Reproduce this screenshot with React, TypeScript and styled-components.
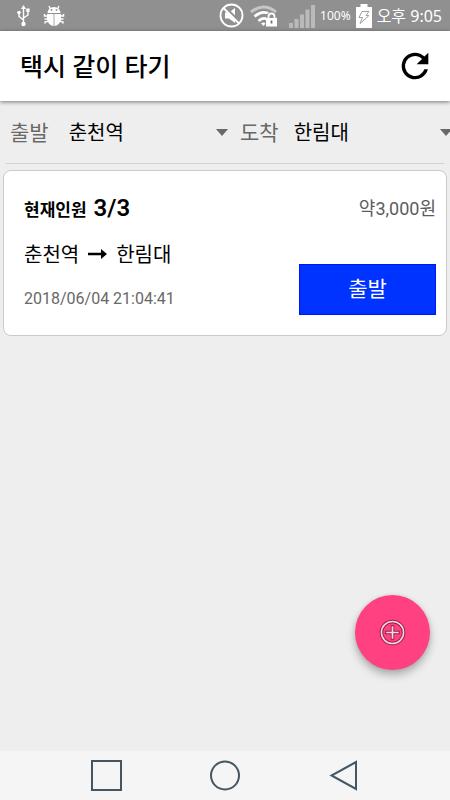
import React from "react";
import styled, { createGlobalStyle } from "styled-components";

const GlobalStyle = createGlobalStyle`
  * { box-sizing: border-box; }
  body {
    margin: 0;
    background: #eeeeee;
    font-family: Roboto, "Noto Sans CJK KR", sans-serif;
    color: #000;
  }
  button, select { font-family: inherit; }
`;

const Screen = styled.div`
  min-height: 100vh;
  display: flex;
  flex-direction: column;
  overflow: hidden;
`;

const StatusBar = styled.div`
  height: 31px;
  flex: none;
  display: flex;
  align-items: center;
  justify-content: space-between;
  padding: 0 8px 0 16px;
  background: #909090;
  color: #fff;
`;

const StatusGroup = styled.div<{ $gap: number }>`
  display: flex;
  align-items: center;
  gap: ${(p) => p.$gap}px;
  svg { display: block; flex: none; }
`;

const Connectivity = styled.div`
  display: flex;
  align-items: center;
  gap: 6px;
  margin-right: 7px;
`;

const Battery = styled.span`
  font: 12px/20px "Noto Sans", sans-serif;
`;

const Clock = styled.time`
  font: 16px/24px "Noto Sans", "Noto Sans CJK KR", sans-serif;
  white-space: nowrap;
`;

const AppBar = styled.header`
  height: 70px;
  flex: none;
  display: flex;
  align-items: center;
  justify-content: space-between;
  padding: 0 15px 0 20px;
  background: #fff;
  box-shadow: 0 1px 4px rgba(0, 0, 0, 0.5);
`;

const Title = styled.h1`
  margin: 0;
  padding-top: 4px;
  font-size: 25px;
  line-height: 36px;
  font-weight: 500;
`;

const IconButton = styled.button`
  display: flex;
  padding: 0;
  border: 0;
  background: none;
  color: #000;
`;

const Filters = styled.form`
  display: grid;
  grid-template-columns: 36fr 35fr;
  gap: 12px;
  height: 63px;
  margin: 0 -2px 0 6px;
  padding-left: 4px;
`;

const Field = styled.label<{ $gap: number }>`
  min-width: 0;
  display: flex;
  align-items: center;
  gap: ${(p) => p.$gap}px;
  color: #686868;
  font-size: 21px;
  line-height: 30px;
  white-space: nowrap;
`;

const Picker = styled.span`
  flex: 1;
  min-width: 0;
  display: flex;
  align-items: center;
  svg { flex: none; }
`;

const Select = styled.select`
  flex: 1;
  min-width: 0;
  appearance: none;
  padding: 0;
  border: 0;
  background: none;
  color: #000;
  font-size: 20px;
  line-height: 30px;
`;

const Divider = styled.hr`
  width: auto;
  height: 1px;
  margin: -1px 6px 0;
  border: 0;
  background: #d2d2d2;
`;

const Main = styled.main`
  flex: 1;
`;

const Card = styled.article`
  display: flex;
  justify-content: space-between;
  height: 166px;
  margin: 6px 3px 0 3px;
  padding: 19px 10px 20px 20px;
  border: 1px solid #cacaca;
  border-radius: 8px;
  background: #fff;
`;

const Column = styled.div<{ $end?: boolean }>`
  display: flex;
  flex-direction: column;
  justify-content: ${(p) => (p.$end ? "space-between" : "flex-start")};
  align-items: ${(p) => (p.$end ? "flex-end" : "flex-start")};
`;

const People = styled.p`
  margin: 0;
  display: flex;
  align-items: baseline;
  gap: 7px;
  font-size: 17px;
  line-height: 36px;
  font-weight: 700;
  strong { font-size: 24px; font-weight: 600; }
`;

const Route = styled.h2`
  margin: 11px 0 0;
  display: flex;
  align-items: center;
  gap: 9px;
  font-size: 20px;
  line-height: 32px;
  font-weight: 400;
`;

const DateText = styled.time`
  margin-top: 16px;
  color: #686868;
  font-size: 16px;
  line-height: 24px;
`;

const Price = styled.span`
  color: #5c5c5c;
  font-size: 18px;
  line-height: 38px;
`;

const Depart = styled.button`
  width: 137px;
  height: 51px;
  padding: 0 0 2px;
  border: 1px solid #0018f0;
  background: #0033ff;
  color: #fff;
  font-size: 21px;
  line-height: 30px;
`;

const Fab = styled.button`
  position: fixed;
  right: 20px;
  bottom: 130px;
  width: 75px;
  height: 75px;
  display: grid;
  place-items: center;
  padding: 0;
  border: 0;
  border-radius: 50%;
  background: #ff4081;
  box-shadow: 0 5px 8px rgba(0, 0, 0, 0.28), 0 0 4px rgba(0, 0, 0, 0.1);
`;

const NavBar = styled.nav`
  height: 49px;
  flex: none;
  display: flex;
  align-items: center;
  justify-content: center;
  gap: 88px;
  background: #f5f5f5;
`;

const UsbIcon = () => (
  <svg width="15" height="22" viewBox="0 0 15 22" fill="none" stroke="#fff" strokeWidth="1.4">
    <path d="M7.5 18V3M7.5 15L3 11.5V8M7.5 13L12 10V6" />
    <path d="M7.5 0l2.5 4H5z" fill="#fff" stroke="none" />
    <circle cx="7.5" cy="19" r="2.2" fill="#fff" stroke="none" />
    <circle cx="3" cy="7.5" r="1.8" fill="#fff" stroke="none" />
    <path d="M10.2 3.5h3.4v3.4h-3.4z" fill="#fff" stroke="none" />
  </svg>
);

const BugIcon = () => (
  <svg width="22" height="22" viewBox="0 0 22 22">
    <path d="M4.500 8a6.500 6 0 0 1 13 0z" fill="#fff" />
    <path d="M7.500 4L6 1M14.500 4L16 1" stroke="#fff" strokeWidth="1.4" fill="none" />
    <path d="M1.500 9v2H5M1.500 14H5M2 18.500V17l4-1M20.500 9v2H17M20.500 14H17M20 18.500V17l-4-1" stroke="#fff" strokeWidth="1.5" fill="none" />
    <path d="M4 9h14v4.500a7 7.500 0 0 1-14 0z" fill="#fff" />
    <path d="M11 9v12" stroke="#a8a8a8" strokeWidth="1" />
    <circle cx="8.5" cy="5" r=".9" fill="#909090" />
    <circle cx="13.5" cy="5" r=".9" fill="#909090" />
  </svg>
);

const MuteIcon = () => (
  <svg width="25" height="25" viewBox="0 0 25 25">
    <path d="M6 9.5h4l6-4.5v15l-6-4.5H6z" fill="#fff" />
    <path d="M5.5 4L21 19.5" stroke="#909090" strokeWidth="3" />
    <circle cx="12.5" cy="12.5" r="11" fill="none" stroke="#fff" strokeWidth="1.8" />
    <path d="M4.5 5L20 20.5" stroke="#fff" strokeWidth="1.8" />
  </svg>
);

const WifiLockIcon = () => (
  <svg width="27" height="22" viewBox="0 0 27 22" fill="none">
    <path d="M1 7Q13.500-3 26 7" stroke="#c6c6c6" strokeWidth="3" />
    <path d="M4.500 11.500Q13.500 4 21 10M8.500 16Q12.500 12 17 14" stroke="#fff" strokeWidth="2.800" />
    <path d="M11 18.500q2.500-2 4.500 0L13.500 21z" fill="#fff" />
    <path d="M18.500 14v-2.500a3 3 0 0 1 6 0V14" stroke="#909090" strokeWidth="4" />
    <path d="M18.500 14v-2.500a3 3 0 0 1 6 0V14" stroke="#fff" strokeWidth="1.800" />
    <path d="M16 13h11v8.500H16z" fill="#fff" />
    <path d="M21.500 15.500v3" stroke="#707070" strokeWidth="1.800" />
  </svg>
);

const SignalIcon = () => (
  <svg width="26" height="24" viewBox="0 0 26 24" fill="#bababa">
    <path d="M0 19h4v5H0zM5.500 15h4v9h-4zM11 10.500h4V24h-4zM16.500 5.500h4V24h-4zM22 1h4v23h-4z" />
  </svg>
);

const BatteryIcon = () => (
  <svg width="16" height="24" viewBox="0 0 16 24">
    <path d="M4.500 0h7v3H16v21H0V3h4.500z" fill="#fff" />
    <path d="M6 7.500h7l-3 4h3L4 19.500l2.500-6H3z" fill="none" stroke="#a0a0a0" strokeWidth="1" />
  </svg>
);

const RefreshIcon = () => (
  <svg width="40" height="40" viewBox="0 0 24 24" fill="currentColor" aria-hidden="true">
    <path d="M17.650 6.350A7.960 7.960 0 0 0 12 4a8 8 0 1 0 7.730 10h-2.080A6 6 0 1 1 12 6c1.660 0 3.140.69 4.220 1.780L13 11h7V4z" />
  </svg>
);

const Caret = () => (
  <svg width="12" height="7" viewBox="0 0 12 7" aria-hidden="true">
    <path d="M0 0h12L6 7z" fill="#686868" />
  </svg>
);

const RouteArrow = () => (
  <svg width="19" height="12" viewBox="0 0 19 12" role="img" aria-label="→">
    <path d="M0 3.800h13V0l6 5-6 5V6.200H0z" fill="#000" />
  </svg>
);

const AddIcon = () => (
  <svg width="27" height="27" viewBox="0 0 28 28" fill="none" aria-hidden="true">
    <circle cx="14" cy="14" r="11.500" stroke="#8e2049" strokeWidth="3.600" />
    <circle cx="14" cy="14" r="11.500" stroke="#ffd3e1" strokeWidth="1.600" />
    <path d="M14 6.500v15M6.500 14h15" stroke="#8e2049" strokeWidth="3.600" />
    <path d="M14 7.500v13M7.500 14h13" stroke="#ffd3e1" strokeWidth="1.800" />
  </svg>
);

const NavIcon = ({ path }: { path: string }) => (
  <svg width="31" height="31" viewBox="0 0 31 31" fill="none" stroke="#455662" strokeWidth="2" aria-hidden="true">
    <path d={path} />
  </svg>
);

const navItems = [
  { name: "최근 앱", path: "M1 1h29v29H1z" },
  { name: "홈", path: "M15 1.500a14 14 0 1 0 0 28a14 14 0 1 0 0-28z" },
  { name: "뒤로", path: "M27 2v27L2.500 15.500z" },
];

const stops = ["춘천역", "한림대"];

function StopField({ label, value, gap }: { label: string; value: string; gap: number }) {
  return (
    <Field $gap={gap}>
      {label}
      <Picker>
        <Select defaultValue={value}>
          {stops.map((stop) => (
            <option key={stop}>{stop}</option>
          ))}
        </Select>
        <Caret />
      </Picker>
    </Field>
  );
}

export default function App() {
  return (
    <Screen>
      <GlobalStyle />
      <StatusBar>
        <StatusGroup $gap={12}>
          <UsbIcon />
          <BugIcon />
        </StatusGroup>
        <StatusGroup $gap={5}>
          <Connectivity>
            <MuteIcon />
            <WifiLockIcon />
          </Connectivity>
          <SignalIcon />
          <Battery>100%</Battery>
          <BatteryIcon />
          <Clock>오후 9:05</Clock>
        </StatusGroup>
      </StatusBar>
      <AppBar>
        <Title>택시 같이 타기</Title>
        <IconButton type="button" aria-label="새로고침">
          <RefreshIcon />
        </IconButton>
      </AppBar>
      <Main>
        <Filters>
          <StopField label="출발" value="춘천역" gap={20} />
          <StopField label="도착" value="한림대" gap={15} />
        </Filters>
        <Divider />
        <Card>
          <Column>
            <People>
              현재인원 <strong>3/3</strong>
            </People>
            <Route>
              춘천역 <RouteArrow /> 한림대
            </Route>
            <DateText>2018/06/04 21:04:41</DateText>
          </Column>
          <Column $end>
            <Price>약3,000원</Price>
            <Depart type="button">출발</Depart>
          </Column>
        </Card>
      </Main>
      <Fab type="button" aria-label="추가">
        <AddIcon />
      </Fab>
      <NavBar>
        {navItems.map((item) => (
          <IconButton key={item.name} type="button" aria-label={item.name}>
            <NavIcon path={item.path} />
          </IconButton>
        ))}
      </NavBar>
    </Screen>
  );
}
